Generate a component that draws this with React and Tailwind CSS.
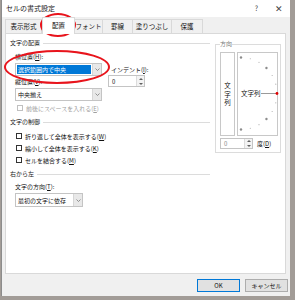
import React from "react";

const U = ({ children }) => <span className="underline">{children}</span>;

function Chevron() {
  return (
    <svg width="5" height="3" viewBox="0 0 5 3">
      <path d="M0.5 0.5 L2.5 2.5 L4.5 0.5" fill="none" stroke="#7a7a7a" strokeWidth="0.8" />
    </svg>
  );
}

function Select({ className, children, highlight }) {
  return (
    <div className={"flex border border-[#c4c4c4] bg-white " + className}>
      <div className="flex-1 flex items-center px-[1px] min-w-0">
        {highlight ? (
          <span className="w-full h-[9px] leading-[9px] bg-[#0078d7] text-white px-[1px] whitespace-nowrap">{children}</span>
        ) : (
          <span className="px-[1px] whitespace-nowrap">{children}</span>
        )}
      </div>
      <div className="w-[9px] bg-[#e8e8e8] border-l border-[#d6d6d6] flex items-center justify-center">
        <Chevron />
      </div>
    </div>
  );
}

function Spinner({ className }) {
  return (
    <div className={"flex border border-[#c4c4c4] bg-white " + className}>
      <div className="flex-1 flex items-center pl-[3px]">0</div>
      <div className="w-[8px] flex flex-col bg-[#f3f3f3] border-l border-[#dcdcdc]">
        <div className="flex-1 flex items-center justify-center">
          <svg width="4" height="2" viewBox="0 0 4 2"><path d="M0 2 L2 0 L4 2Z" fill="#606060" /></svg>
        </div>
        <div className="flex-1 flex items-center justify-center">
          <svg width="4" height="2" viewBox="0 0 4 2"><path d="M0 0 L2 2 L4 0Z" fill="#606060" /></svg>
        </div>
      </div>
    </div>
  );
}

function Header({ children, className }) {
  return (
    <div className={"flex items-center h-[8px] leading-[8px] " + (className || "")}>
      <span className="whitespace-nowrap text-[#1a1a1a]">{children}</span>
      <div className="flex-1 h-px bg-[#dcdcdc] ml-[3px]" />
    </div>
  );
}

function Check({ children, disabled, className }) {
  return (
    <div className={"flex items-center " + (className || "")}>
      <div className={"w-[6px] h-[6px] bg-white border " + (disabled ? "border-[#c0c0c0]" : "border-[#333333]")} />
      <span className={"ml-[3px] whitespace-nowrap " + (disabled ? "text-[#a0a0a0]" : "")}>{children}</span>
    </div>
  );
}

function Dial() {
  const cx = 3;
  const cy = 40.5;
  const r = 36;
  const dots = [];
  for (let a = 90; a >= -90; a -= 15) {
    if (a === 0) continue;
    const rad = (a * Math.PI) / 180;
    const x = cx + r * Math.cos(rad);
    const y = cy - r * Math.sin(rad);
    const big = a % 45 === 0;
    dots.push(<circle key={a} cx={x} cy={y} r={big ? 1.2 : 0.6} fill={big ? "#8c8c8c" : "#b0b0b0"} />);
  }
  return (
    <svg className="absolute inset-0 overflow-visible" width="39" height="82" viewBox="0 0 39 82">
      {dots}
      <line x1="23" y1={cy} x2={cx + r} y2={cy} stroke="#555" strokeWidth="0.6" />
      <circle cx={cx + r} cy={cy} r="1.4" fill="#e00000" />
    </svg>
  );
}

export default function App() {
  return (
    <div className="w-[295px] h-[300px] bg-[#a29c97] font-['Noto_Sans_CJK_JP','Noto_Sans',sans-serif] text-[6px] text-[#111] overflow-hidden">
      <div className="relative ml-[1px] w-[289px] h-[296px] bg-[#f0f0f0] border-l border-[#8c8c8c] flex flex-col">
        {/* title bar */}
        <div className="h-[17px] bg-white flex items-center pl-[4px] pr-[7px] text-[7px]">
          <span className="text-[#222]">セルの書式設定</span>
          <div className="flex-1" />
          <span className="text-[7px] text-[#444]">?</span>
          <span className="ml-[17px] text-[9px] leading-[9px] text-[#444]">✕</span>
        </div>
        {/* tabs */}
        <div className="h-[16px] flex items-end pl-[3px] text-[6.5px]">
          <div className="w-[37px] h-[14px] flex items-center justify-center border border-b-0 border-[#d9d9d9]">表示形式</div>
          <div className="w-[33px] h-[17px] -mb-px relative z-[1] bg-white flex items-center justify-center border border-b-0 border-[#d9d9d9]">配置</div>
          <div className="w-[28px] h-[14px] flex items-center justify-center border border-b-0 border-l-0 border-[#d9d9d9]">フォント</div>
          <div className="w-[30px] h-[14px] flex items-center justify-center border border-b-0 border-l-0 border-[#d9d9d9]">罫線</div>
          <div className="w-[39px] h-[14px] flex items-center justify-center border border-b-0 border-l-0 border-[#d9d9d9]">塗りつぶし</div>
          <div className="w-[31px] h-[14px] flex items-center justify-center border border-b-0 border-l-0 border-[#d9d9d9]">保護</div>
        </div>
        {/* panel */}
        <div className="ml-[3px] w-[281px] h-[241px] bg-white border border-[#d9d9d9] flex pt-[5px] pl-[4px]">
          {/* left column */}
          <div className="w-[200px] flex flex-col">
            <Header>文字の配置</Header>
            <div className="flex pl-[5px]">
              <div className="w-[87px] flex flex-col">
                <div className="mt-[6px] h-[8px] leading-[8px]">横位置(<U>H</U>):</div>
                <Select className="mt-[2px] w-[87px] h-[13px]" highlight>選択範囲内で中央</Select>
                <div className="mt-[2px] h-[8px] leading-[8px]">縦位置(<U>V</U>):</div>
                <Select className="mt-[2px] w-[87px] h-[13px]">中央揃え</Select>
              </div>
              <div className="ml-[6px] flex flex-col">
                <div className="mt-[19px] pl-[3px] h-[8px] leading-[8px] whitespace-nowrap">インデント(<U>I</U>):</div>
                <Spinner className="mt-[1px] w-[37px] h-[12px]" />
              </div>
            </div>
            <Check disabled className="mt-[3px] h-[8px] pl-[7px]">前後にスペースを入れる(<U>E</U>)</Check>
            <Header className="mt-[6px]">文字の制御</Header>
            <div className="mt-[4px] flex flex-col pl-[6px]">
              <Check className="h-[12px]">折り返して全体を表示する(<U>W</U>)</Check>
              <Check className="h-[12px]">縮小して全体を表示する(<U>K</U>)</Check>
              <Check className="h-[12px]">セルを結合する(<U>M</U>)</Check>
            </div>
            <Header className="mt-[4px]">右から左</Header>
            <div className="mt-[5px] pl-[5px] h-[8px] leading-[8px]">文字の方向(<U>T</U>):</div>
            <Select className="mt-[2px] ml-[5px] w-[68px] h-[14px]">最初の文字に依存</Select>
          </div>
          {/* right column */}
          <fieldset className="ml-[5px] mt-[1px] w-[66px] h-[113px] border border-[#dcdcdc] pl-[4px] pr-[2px]">
            <legend className="text-[#7a7a7a] leading-[8px] h-[8px]">方向</legend>
            <div className="mt-[4px] flex gap-[2px]">
              <div className="w-[15px] h-[84px] border border-[#c8c8c8] flex flex-col items-center justify-center text-[6.5px] leading-[8.5px]">
                <span>文</span>
                <span>字</span>
                <span>列</span>
              </div>
              <div className="relative w-[41px] h-[84px] border border-[#c8c8c8] flex items-center pl-[3px] text-[6.5px]">
                <Dial />
                <span className="relative">文字列</span>
              </div>
            </div>
            <div className="mt-[2px] flex items-center">
              <Spinner className="w-[33px] h-[11px] text-[#888]" />
              <span className="ml-[4px] whitespace-nowrap">度(<U>D</U>)</span>
            </div>
          </fieldset>
        </div>
        {/* bottom buttons */}
        <div className="flex-1 flex items-center justify-end pr-[2px] gap-[5px]">
          <div className="w-[43px] h-[13px] bg-[#e1e1e1] border border-[#0078d7] flex items-center justify-center">OK</div>
          <div className="w-[43px] h-[13px] bg-[#e1e1e1] border border-[#adadad] flex items-center justify-center">キャンセル</div>
        </div>
        {/* red annotation ellipses */}
        <div className="absolute left-[38px] top-[13px] w-[36px] h-[24px] rounded-[50%] border-2 border-[#e8141c]" />
        <div className="absolute left-[2px] top-[50px] w-[106px] h-[34px] rounded-[50%] border-2 border-[#e8141c]" />
      </div>
    </div>
  );
}
